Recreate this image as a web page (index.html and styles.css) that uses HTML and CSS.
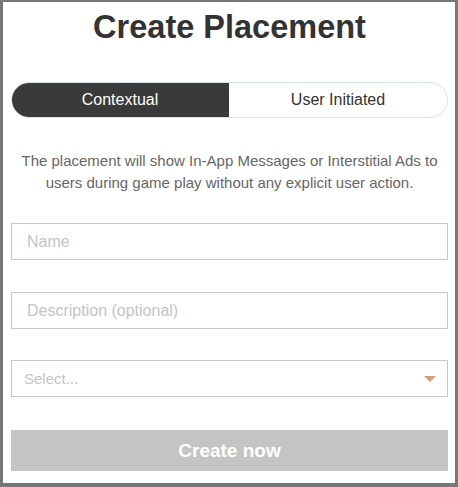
FILE: index.html
```html
<!DOCTYPE html>
<html>
<head>
<meta charset="utf-8">
<link rel="stylesheet" href="styles.css">
</head>
<body>
<div class="frame">
  <h1 class="title">Create Placement</h1>
  <div class="toggle">
    <div class="seg seg-active">Contextual</div>
    <div class="seg">User Initiated</div>
  </div>
  <p class="desc">The placement will show In-App Messages or Interstitial Ads to users during game play without any explicit user action.</p>
  <div class="field"><span class="ph ph-input">Name</span></div>
  <div class="field"><span class="ph ph-input">Description (optional)</span></div>
  <div class="field field-select"><span class="ph ph-select">Select...</span><span class="caret"></span></div>
  <div class="btn">Create now</div>
</div>
</body>
</html>
```
FILE: styles.css
```css
html, body { margin: 0; padding: 0; background: #fff; }
body { font-family: "Liberation Sans", Arial, sans-serif; }
.frame {
  box-sizing: border-box;
  width: 458px;
  height: 487px;
  border-style: solid;
  border-color: #777;
  border-width: 2px 3px 4px 3px;
  padding: 0 7px 0 8px;
  display: flex;
  flex-direction: column;
}
.title {
  margin: 7px 0 0;
  font-size: 32.5px;
  line-height: 36px;
  font-weight: bold;
  color: #333;
  text-align: center;
}
.toggle {
  margin-top: 37px;
  height: 36px;
  display: flex;
  border: 1px solid #d5e3e6;
  border-radius: 19px;
  overflow: hidden;
  box-sizing: border-box;
}
.seg {
  flex: 1;
  display: flex;
  align-items: center;
  justify-content: center;
  font-size: 16px;
  color: #333;
}
.seg-active { background: #3a3a3a; color: #fff; margin: -1px 0 -1px -1px; }
.desc {
  margin: 32px 0 0;
  font-size: 15px;
  line-height: 22px;
  color: #666;
  text-align: center;
}
.field {
  height: 37px;
  box-sizing: border-box;
  border: 1px solid #c8c8c8;
  display: flex;
  align-items: center;
  padding: 0 15px;
}
.desc + .field { margin-top: 29px; }
.field + .field { margin-top: 32px; }
.field-select { padding: 0 12px; justify-content: space-between; margin-top: 31px !important; }
.ph { font-size: 16px; color: #c4c4c4; }
.ph-select { font-size: 15px; }
.caret {
  width: 0; height: 0;
  border-left: 6px solid transparent;
  border-right: 6px solid transparent;
  border-top: 6px solid #d2a07a;
  margin-right: -1px;
}
.btn {
  margin-top: 33px;
  height: 41px;
  background: #c4c4c4;
  color: #fff;
  font-weight: bold;
  font-size: 19px;
  display: flex;
  align-items: center;
  justify-content: center;
}
```
